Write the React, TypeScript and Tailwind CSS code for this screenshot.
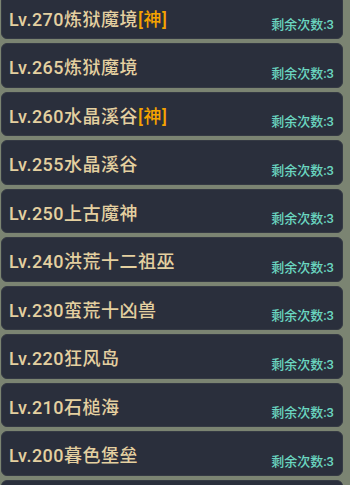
import React from 'react';

interface Stage {
  level: number;
  name: string;
  god?: boolean;
  left?: number;
}

const stages: Stage[] = [
  { level: 270, name: '炼狱魔境', god: true, left: 3 },
  { level: 265, name: '炼狱魔境', left: 3 },
  { level: 260, name: '水晶溪谷', god: true, left: 3 },
  { level: 255, name: '水晶溪谷', left: 3 },
  { level: 250, name: '上古魔神', left: 3 },
  { level: 240, name: '洪荒十二祖巫', left: 3 },
  { level: 230, name: '蛮荒十凶兽', left: 3 },
  { level: 220, name: '狂风岛', left: 3 },
  { level: 210, name: '石槌海', left: 3 },
  { level: 200, name: '暮色堡垒', left: 3 },
  // next row peeks in at the bottom edge
  { level: 190, name: '' },
];

const StageRow = ({ stage }: { stage: Stage }) => (
  <div className="relative h-[44.5px] shrink-0 rounded-[6px] bg-[#2a2f3c] border border-[#353a44]">
    {stage.name && (
      <div className="absolute left-[7px] top-[12px] text-[18px] leading-[24px] font-medium tracking-[0.5px] text-[#e4d0a0] whitespace-nowrap">
        Lv.{stage.level}
        {stage.name}
        {stage.god && <span className="text-[#f5a300]">[神]</span>}
      </div>
    )}
    {stage.left !== undefined && (
      <div className="absolute right-[8px] bottom-[5px] text-[13px] leading-[16px] font-medium text-[#6ad6c0] whitespace-nowrap">
        剩余次数:{stage.left}
      </div>
    )}
  </div>
);

export default function App() {
  return (
    <div
      className="w-[350px] h-[485px] overflow-hidden bg-[#7b8472]"
      style={{ fontFamily: '"Roboto", "Noto Sans CJK SC", sans-serif' }}
    >
      <div className="-mt-[5.5px] ml-[1px] w-[342px] flex flex-col gap-[4px]">
        {stages.map((s) => (
          <StageRow key={s.level} stage={s} />
        ))}
      </div>
    </div>
  );
}
